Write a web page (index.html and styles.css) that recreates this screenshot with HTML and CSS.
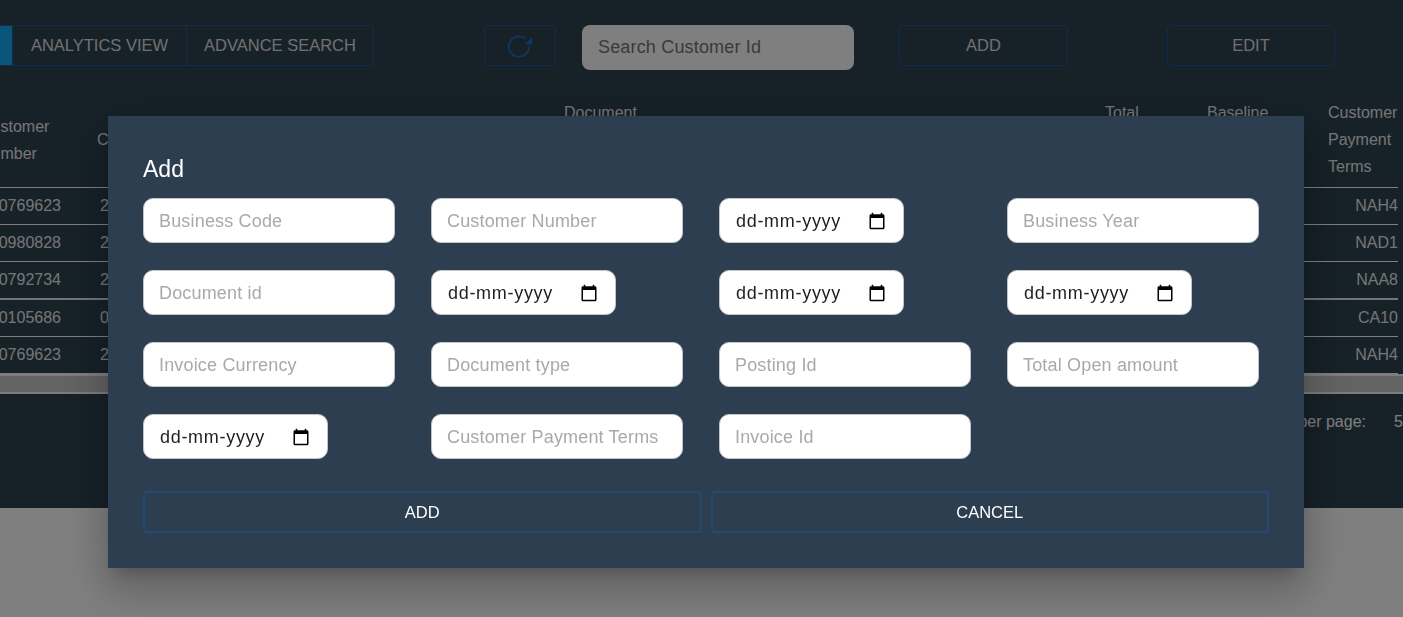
FILE: index.html
```html
<!DOCTYPE html>
<html lang="en">
<head>
<meta charset="utf-8">
<title>Add</title>
<link rel="stylesheet" href="styles.css">
</head>
<body>
<svg class="sprite" aria-hidden="true"><symbol id="cal" viewBox="0 0 24 24"><path d="M20 3h-1V1h-2v2H7V1H5v2H4c-1.1 0-2 .9-2 2v16c0 1.1.9 2 2 2h16c1.1 0 2-.9 2-2V5c0-1.1-.9-2-2-2zm0 18H4V8h16v13z"/></symbol></svg>
<div class="page">
  <header class="toolbar">
    <div class="tabs">
      <button class="tab tab-active">GRID VIEW</button>
      <button class="tab">ANALYTICS VIEW</button>
      <button class="tab">ADVANCE SEARCH</button>
    </div>
    <button class="refresh" aria-label="Refresh">
      <svg class="refresh-icon" viewBox="0 0 30 30"><path d="M24.2 15.5A10.2 10.2 0 1 1 20.5 7.6" fill="none" stroke="currentColor" stroke-width="1.7"/><path d="M27 6.5v7h-7.5z" fill="currentColor"/></svg>
    </button>
    <input class="search" type="text" placeholder="Search Customer Id">
    <button class="action action-add">ADD</button>
    <button class="action action-edit">EDIT</button>
  </header>
  <div class="table-clip">
    <table class="grid">
      <colgroup>
        <col class="col-a"><col class="col-b"><col class="col-c"><col class="col-d"><col class="col-e"><col class="col-f">
      </colgroup>
      <thead>
        <tr>
          <th>Customer<br>Number</th>
          <th>Clear Date</th>
          <th>Document<br>Create<br>Date</th>
          <th>Total<br>Open<br>Amount</th>
          <th>Baseline<br>Create<br>Date</th>
          <th>Customer<br>Payment<br>Terms</th>
        </tr>
      </thead>
      <tbody>
        <tr><td>0200769623</td><td>2</td><td></td><td></td><td></td><td class="end">NAH4</td></tr>
        <tr><td>0200980828</td><td>2</td><td></td><td></td><td></td><td class="end">NAD1</td></tr>
        <tr class="row-thick"><td>0200792734</td><td>2</td><td></td><td></td><td></td><td class="end">NAA8</td></tr>
        <tr class="row-tall"><td>0140105686</td><td>0</td><td></td><td></td><td></td><td class="end">CA10</td></tr>
        <tr><td>0200769623</td><td>2</td><td></td><td></td><td></td><td class="end">NAH4</td></tr>
      </tbody>
    </table>
  </div>
  <div class="hscroll"><div class="hscroll-thumb"></div></div>
  <footer class="pager">
    <span class="pager-label">Rows per page:</span>
    <span class="pager-value">5</span>
  </footer>
</div>
<div class="backdrop"></div>
<div class="dialog" role="dialog">
  <h2 class="dialog-title">Add</h2>
  <form class="fields">
    <input class="field" type="text" placeholder="Business Code">
    <input class="field" type="text" placeholder="Customer Number">
    <label class="field-date"><input class="date-text" type="text" placeholder="dd-mm-yyyy"><svg class="cal-icon"><use href="#cal"/></svg></label>
    <input class="field" type="text" placeholder="Business Year">
    <input class="field" type="text" placeholder="Document id">
    <label class="field-date"><input class="date-text" type="text" placeholder="dd-mm-yyyy"><svg class="cal-icon"><use href="#cal"/></svg></label>
    <label class="field-date"><input class="date-text" type="text" placeholder="dd-mm-yyyy"><svg class="cal-icon"><use href="#cal"/></svg></label>
    <label class="field-date"><input class="date-text" type="text" placeholder="dd-mm-yyyy"><svg class="cal-icon"><use href="#cal"/></svg></label>
    <input class="field" type="text" placeholder="Invoice Currency">
    <input class="field" type="text" placeholder="Document type">
    <input class="field" type="text" placeholder="Posting Id">
    <input class="field" type="text" placeholder="Total Open amount">
    <label class="field-date"><input class="date-text" type="text" placeholder="dd-mm-yyyy"><svg class="cal-icon"><use href="#cal"/></svg></label>
    <input class="field" type="text" placeholder="Customer Payment Terms">
    <input class="field" type="text" placeholder="Invoice Id">
  </form>
  <div class="dialog-actions">
    <button class="dialog-btn">ADD</button>
    <button class="dialog-btn">CANCEL</button>
  </div>
</div>
</body>
</html>
```
FILE: styles.css
```css
* { box-sizing: border-box; }
html, body { margin: 0; height: 617px; overflow: hidden; background: #fff; }
body { font-family: "Liberation Sans", Arial, sans-serif; }
button { font-family: inherit; cursor: pointer; }
.sprite { display: none; }

.page { height: 508px; background: #2c4250; color: #fff; overflow: hidden; }

.toolbar { display: flex; align-items: flex-start; padding-top: 25px; height: 99px; margin-left: -100px; }
.tabs { display: flex; height: 41px; width: 474px; }
.tab { background: transparent; color: #e0e0e0; border: 1px solid #1d5a94; border-left-width: 0; font-size: 16.5px; height: 41px; padding: 0; white-space: nowrap; }
.tab:nth-child(1) { width: 113px; background: #12abf5; color: #12abf5; }
.tab:nth-child(2) { width: 174px; }
.tab:nth-child(3) { width: 187px; border-radius: 0 4px 4px 0; }
.refresh { margin-left: 110px; width: 72px; height: 41px; background: transparent; border: 1px solid #1d5a94; border-radius: 4px; color: #1b74c6; display: flex; align-items: center; justify-content: center; padding: 0; }
.refresh-icon { width: 30px; height: 30px; }
.search { margin-left: 26px; width: 272px; height: 45px; border: 0; border-radius: 8px; background: #fff; padding: 0 16px; font: 18px "Liberation Sans", Arial, sans-serif; letter-spacing: .17px; }
.search::placeholder { color: #757575; }
.action { background: transparent; color: #e0e0e0; border: 1px solid #1d5a94; border-radius: 4px; height: 41px; font-size: 16.5px; padding: 0; }
.action-add { margin-left: 45px; width: 169px; }
.action-edit { margin-left: 99px; width: 168px; }

.table-clip { margin-left: -28px; height: 275px; }
.grid { border-collapse: collapse; table-layout: fixed; width: 1426px; font-size: 16px; color: #ebebeb; }
.col-a { width: 125px; } .col-b { width: 467px; } .col-c { width: 541px; } .col-d { width: 102px; } .col-e { width: 121px; } .col-f { width: 70px; }
.grid th { font-weight: 400; text-align: left; line-height: 27px; padding: 0 0 7px; height: 88px; border-bottom: 1px solid #fff; vertical-align: middle; }
.grid th:first-child { padding-left: 8px; }
.grid td { height: 37px; padding: 0; line-height: 18px; border-bottom: 1px solid #fff; }
.grid .row-tall td { height: 38px; }
.grid .row-thick td { border-bottom: 2px solid #e8e8e8; }
.grid td:nth-child(2) { padding-left: 3px; }
.grid .end { text-align: right; }

.hscroll { height: 20px; background: #f8f8f8; padding: 2px 0; }
.hscroll-thumb { height: 16px; background: #c6c6c6; }

.pager { height: 40px; font-size: 16px; color: #fff; display: flex; justify-content: flex-end; align-items: center; padding-top: 15px; }
.pager-label { margin-right: 28px; }
.pager-value { width: 9px; overflow: hidden; }

.backdrop { position: fixed; inset: 0; background: rgba(0,0,0,.5); }
.dialog { position: fixed; left: 108px; top: 116px; width: 1196px; height: 452px; background: #2c3e50; color: #fff; padding: 40px 35px 0; box-shadow: 0 11px 15px -7px rgba(0,0,0,.2), 0 24px 38px 3px rgba(0,0,0,.14), 0 9px 46px 8px rgba(0,0,0,.12); }
.dialog-title { margin: 0; font-size: 23px; font-weight: 400; line-height: 26px; height: 42px; }
.fields { display: grid; grid-template-columns: repeat(4, 288px); grid-auto-rows: 45px; row-gap: 27px; justify-items: start; }
.field { width: 252px; height: 45px; border: 1px solid #c4c4c4; border-radius: 10px; background: #fff; padding: 2px 15px 0; font: 18px "Liberation Sans", Arial, sans-serif; letter-spacing: .17px; color: #1a1a1a; }
.field::placeholder { color: #a9a9a9; }
.field-date { width: 185px; height: 45px; border: 1px solid #c4c4c4; border-radius: 10px; background: #fff; padding: 1px 17px 0 16px; display: flex; align-items: center; gap: 0; }
.date-text { flex: 1; min-width: 0; border: 0; padding: 0; background: transparent; outline: 0; font: 18px "Liberation Sans", Arial, sans-serif; letter-spacing: .7px; color: #1a1a1a; }
.date-text::placeholder { color: #1f1f1f; opacity: 1; }
.cal-icon { width: 18px; height: 18px; flex: none; fill: #000; }
.dialog-actions { display: flex; gap: 9px; margin-top: 32px; }
.dialog-btn { flex: 1; height: 42px; background: transparent; color: #fff; border: 2px solid #234a71; border-radius: 4px; font-size: 16.5px; padding: 1px 0 0; }
```
